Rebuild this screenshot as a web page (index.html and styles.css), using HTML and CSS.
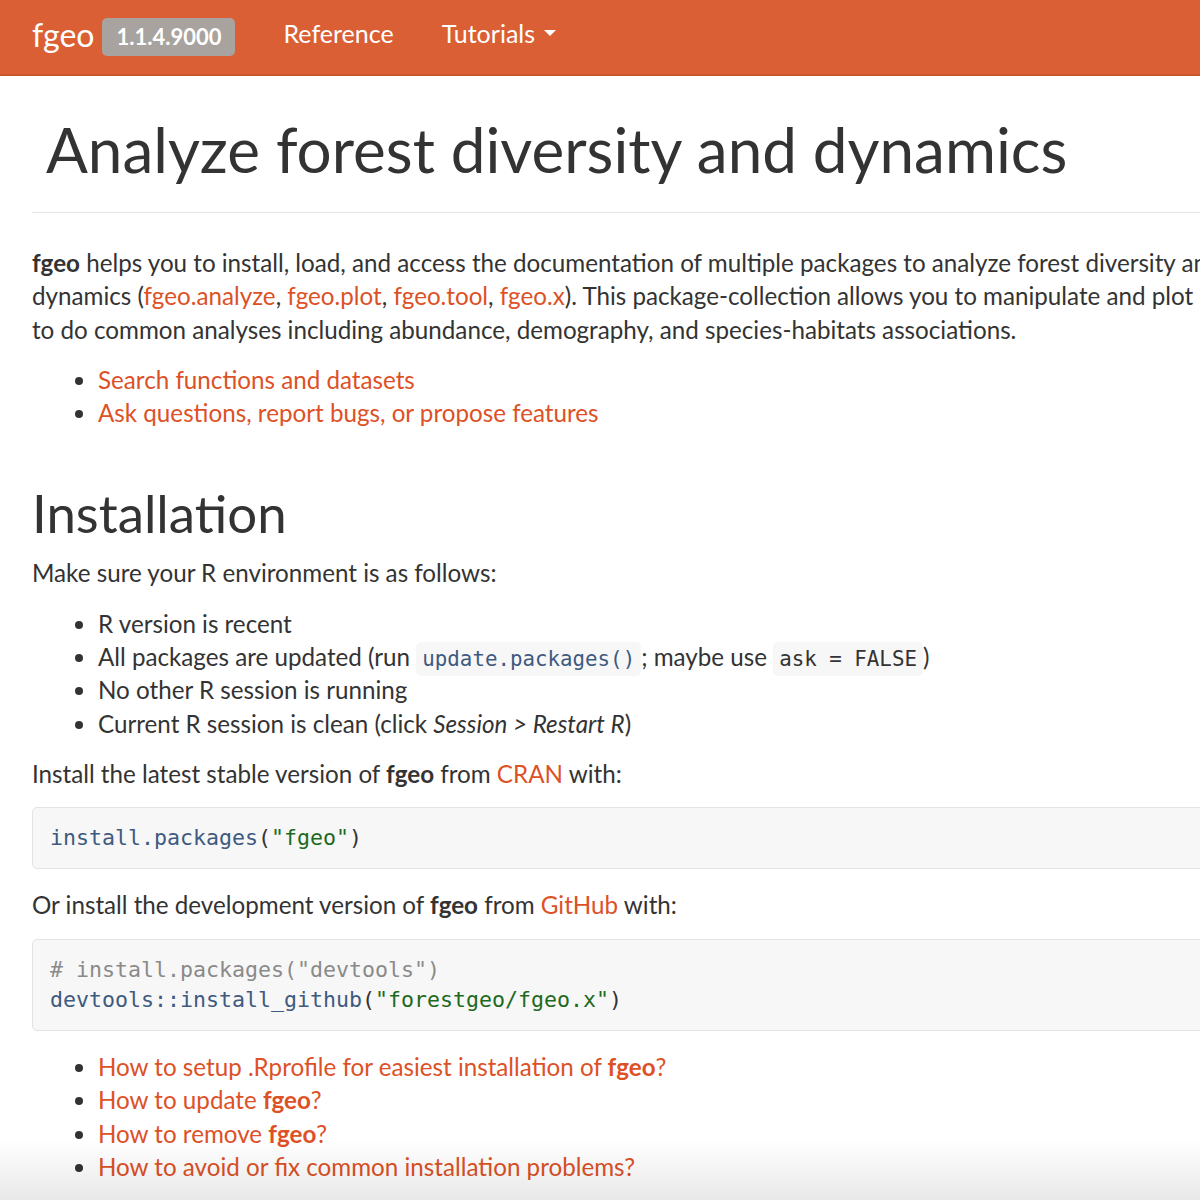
FILE: index.html
```html
<!DOCTYPE html>
<html lang="en">
<head>
<meta charset="utf-8">
<title>fgeo</title>
<link rel="stylesheet" href="styles.css">
</head>
<body>
<header class="navbar">
  <a class="brand" href="#">fgeo</a>
  <span class="version">1.1.4.9000</span>
  <nav class="nav">
    <a class="nav-link" href="#">Reference</a>
    <a class="nav-link" href="#">Tutorials <span class="caret"></span></a>
  </nav>
</header>
<main class="container">
  <div class="page-header">
    <h1>Analyze forest diversity and dynamics</h1>
  </div>
  <p class="nowrap"><strong>fgeo</strong> helps you to install, load, and access the documentation of multiple packages to analyze forest diversity and<br>dynamics (<a href="#">fgeo.analyze</a>, <a href="#">fgeo.plot</a>, <a href="#">fgeo.tool</a>, <a href="#">fgeo.x</a>). This package-collection allows you to manipulate and plot ForestGEO data, and<br>to do common analyses including abundance, demography, and species-habitats associations.</p>
  <ul>
    <li><a href="#">Search functions and datasets</a></li>
    <li><a href="#">Ask questions, report bugs, or propose features</a></li>
  </ul>
  <h2>Installation</h2>
  <p>Make sure your R environment is as follows:</p>
  <ul>
    <li>R version is recent</li>
    <li>All packages are updated (run <code class="fu">update.packages()</code>; maybe use <code>ask = FALSE</code>)</li>
    <li>No other R session is running</li>
    <li>Current R session is clean (click <em>Session &gt; Restart R</em>)</li>
  </ul>
  <p>Install the latest stable version of <strong>fgeo</strong> from <a href="#">CRAN</a> with:</p>
  <pre><span class="fu">install.packages</span>(<span class="st">"fgeo"</span>)</pre>
  <p>Or install the development version of <strong>fgeo</strong> from <a href="#">GitHub</a> with:</p>
  <pre><span class="co"># install.packages("devtools")</span>
<span class="fu">devtools::install_github</span>(<span class="st">"forestgeo/fgeo.x"</span>)</pre>
  <ul class="last">
    <li><a href="#">How to setup .Rprofile for easiest installation of <strong>fgeo</strong>?</a></li>
    <li><a href="#">How to update <strong>fgeo</strong>?</a></li>
    <li><a href="#">How to remove <strong>fgeo</strong>?</a></li>
    <li><a href="#">How to avoid or fix common installation problems?</a></li>
  </ul>
</main>
<div class="fade"></div>
</body>
</html>
```
FILE: styles.css
```css
html, body {
  margin: 0;
  padding: 0;
  overflow: hidden;
  background: #fff;
}
body {
  font-family: Lato, "Open Sans", sans-serif;
  font-size: 24.2px;
  line-height: 33.3px;
  color: #333;
  width: 1600px;
}
a { color: #dd5126; text-decoration: none; }
strong { font-weight: 700; }

.navbar {
  height: 74px;
  background: #da5f35;
  border-bottom: 2px solid #c9552e;
  display: flex;
  align-items: center;
  padding-left: 32px;
}
.brand {
  color: #fff;
  font-size: 32px;
  line-height: 40px;
  padding-bottom: 4px;
}
.version {
  margin-left: 8px;
  background: #a8a39e;
  color: #fff;
  font-weight: 700;
  font-size: 22px;
  line-height: 38px;
  height: 38px;
  padding: 0 14px;
  border-radius: 5px;
}
.nav {
  display: flex;
  margin-left: 48px;
  gap: 48px;
  padding-bottom: 8px;
}
.nav-link {
  color: #fff;
  font-size: 25px;
  line-height: 30px;
  display: flex;
  align-items: center;
}
.caret {
  display: inline-block;
  width: 0;
  height: 0;
  margin-left: 9px;
  border-left: 6px solid transparent;
  border-right: 6px solid transparent;
  border-top: 6px solid #fff;
}

.container {
  padding-left: 32px;
}
.page-header {
  border-bottom: 1px solid #e6e6e6;
  padding-top: 39px;
  padding-bottom: 29px;
  margin-bottom: 33px;
}
h1 {
  margin: 0 0 0 14px;
  font-weight: 400;
  font-size: 62px;
  line-height: 68px;
  color: #333;
}
h2 {
  margin: 54px 0 14px;
  font-weight: 400;
  font-size: 52.8px;
  line-height: 59px;
  color: #333;
}
p { margin: 0 0 17px; }
.nowrap { white-space: nowrap; }
ul {
  margin: 0 0 17px;
  padding-left: 66px;
}
ul.last li { line-height: 33.5px; }
code {
  font-family: "DejaVu Sans Mono", monospace;
  font-size: 20.8px;
  line-height: 1;
  background: #f7f7f7;
  border-radius: 5px;
  padding: 5px 6px;
  color: #333;
}
code.fu { color: #3e5a80; }
pre {
  margin: 0 0 19px;
  padding: 15px 17px;
  background: #f7f7f7;
  border: 1px solid #e3e3e3;
  border-radius: 5px;
  font-family: "DejaVu Sans Mono", monospace;
  font-size: 21.6px;
  line-height: 30px;
  color: #333;
}
.fu { color: #3e5a80; }
.st { color: #1d6a1d; }
.co { color: #8a8a8a; }

.fade {
  position: fixed;
  left: 0;
  right: 0;
  bottom: 0;
  height: 60px;
  background: linear-gradient(to bottom, rgba(0,0,0,0), rgba(0,0,0,0.09));
  pointer-events: none;
}
```
